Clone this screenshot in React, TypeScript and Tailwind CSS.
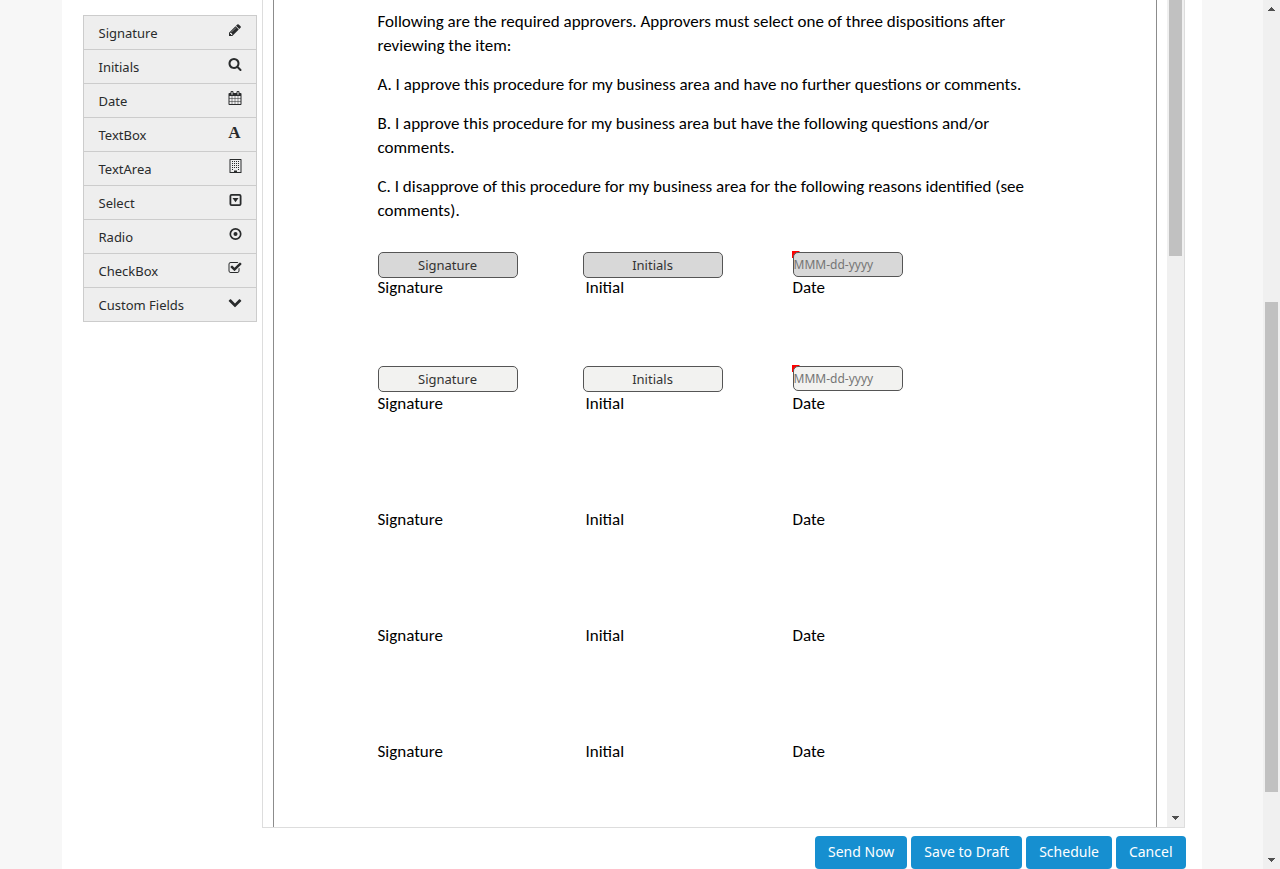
import type { ReactNode } from "react";

function Glyph({ children }: { children: ReactNode }) {
  return (
    <svg viewBox="0 0 1792 1792" className="size-3.5 shrink-0 fill-current" aria-hidden="true">
      {children}
    </svg>
  );
}

const icons = {
  pencil: (
    <Glyph>
      <path d="M491 1536l91-91-235-235-91 91v107h128v128h107zm523-928q0-22-22-22-10 0-17 7l-542 542q-7 7-7 17 0 22 22 22 10 0 17-7l542-542q7-7 7-17zm-54-192l416 416-832 832h-416v-416zm683 96q0 53-37 90l-166 166-416-416 166-165q36-38 90-38 53 0 91 38l235 234q37 39 37 91z" />
    </Glyph>
  ),
  search: (
    <Glyph>
      <path d="M1216 832q0-185-131.5-316.5t-316.5-131.5-316.5 131.5-131.5 316.5 131.5 316.5 316.5 131.5 316.5-131.5 131.5-316.5zm512 832q0 52-38 90t-90 38q-54 0-90-38l-343-342q-179 124-399 124-143 0-273.5-55.5t-225-150-150-225-55.5-273.5 55.5-273.5 150-225 225-150 273.5-55.5 273.5 55.5 225 150 150 225 55.5 273.5q0 220-124 399l343 343q37 37 37 90z" />
    </Glyph>
  ),
  calendar: (
    <Glyph>
      <path d="M192 1664h288v-288h-288v288zm352 0h320v-288h-320v288zm-352-352h288v-320h-288v320zm352 0h320v-320h-320v320zm-352-384h288v-288h-288v288zm736 736h320v-288h-320v288zm-384-736h320v-288h-320v288zm768 736h288v-288h-288v288zm-384-352h320v-320h-320v320zm-352-864v-288q0-13-9.5-22.5t-22.5-9.5h-64q-13 0-22.5 9.5t-9.5 22.5v288q0 13 9.5 22.5t22.5 9.5h64q13 0 22.5-9.5t9.5-22.5zm736 864h288v-320h-288v320zm-384-384h320v-288h-320v288zm384 0h288v-288h-288v288zm32-480v-288q0-13-9.5-22.5t-22.5-9.5h-64q-13 0-22.5 9.5t-9.5 22.5v288q0 13 9.5 22.5t22.5 9.5h64q13 0 22.5-9.5t9.5-22.5zm384-64v1280q0 52-38 90t-90 38h-1408q-52 0-90-38t-38-90v-1280q0-52 38-90t90-38h128v-96q0-66 47-113t113-47h64q66 0 113 47t47 113v96h384v-96q0-66 47-113t113-47h64q66 0 113 47t47 113v96h128q52 0 90 38t38 90z" />
    </Glyph>
  ),
  building: (
    <svg viewBox="0 0 14 14" className="size-3.5 shrink-0 fill-current" aria-hidden="true">
      <path
        fillRule="evenodd"
        d="M2 0h11a.5.5 0 0 1 .5.5v13a.5.5 0 0 1-.5.5H2a.5.5 0 0 1-.5-.5V.5A.5.5 0 0 1 2 0zM2.5 1v12H6v-1.5h3V13h3.5V1z"
      />
      <path d="M4 2h1v1H4zM6 2h1v1H6zM8 2h1v1H8zM10 2h1v1h-1zM4 4h1v1H4zM6 4h1v1H6zM8 4h1v1H8zM10 4h1v1h-1zM4 6h1v1H4zM6 6h1v1H6zM8 6h1v1H8zM10 6h1v1h-1zM4 8h1v1H4zM6 8h1v1H6zM8 8h1v1H8zM10 8h1v1h-1zM4 10h1v1H4zM10 10h1v1h-1z" />
    </svg>
  ),
  select: (
    <svg viewBox="0 0 14 14" className="size-3.5 shrink-0" aria-hidden="true">
      <rect x="2.4" y="1.9" width="10.2" height="10.2" rx="1.2" fill="none" stroke="currentColor" strokeWidth="1.8" />
      <path d="M4.5 5h6l-3 4.2z" fill="currentColor" />
    </svg>
  ),
  radio: (
    <svg viewBox="0 0 14 14" className="size-3.5 shrink-0" aria-hidden="true">
      <circle cx="7.5" cy="7" r="5.2" fill="none" stroke="currentColor" strokeWidth="1.7" />
      <circle cx="7.5" cy="7" r="2" fill="currentColor" />
    </svg>
  ),
  check: (
    <Glyph>
      <path d="M1472 930v318q0 119-84.5 203.5t-203.5 84.5h-832q-119 0-203.5-84.5t-84.5-203.5v-832q0-119 84.5-203.5t203.5-84.5h832q63 0 117 25 15 7 18 23 3 17-9 29l-49 49q-10 10-23 10-3 0-9-2-23-6-45-6h-832q-66 0-113 47t-47 113v832q0 66 47 113t113 47h832q66 0 113-47t47-113v-254q0-13 9-22l64-64q10-10 23-10 6 0 12 3 20 8 20 29zm231-489l-814 814q-24 24-57 24t-57-24l-430-430q-24-24-24-57t24-57l110-110q24-24 57-24t57 24l263 263 647-647q24-24 57-24t57 24l110 110q24 24 24 57t-24 57z" />
    </Glyph>
  ),
  chevron: (
    <Glyph>
      <path d="M1683 808l-742 741q-19 19-45 19t-45-19l-742-741q-19-19-19-45.5t19-45.5l166-165q19-19 45-19t45 19l531 531 531-531q19-19 45-19t45 19l166 165q19 19 19 45.5t-19 45.5z" />
    </Glyph>
  ),
};

const tools: { label: string; icon: ReactNode }[] = [
  { label: "Signature", icon: icons.pencil },
  { label: "Initials", icon: icons.search },
  { label: "Date", icon: icons.calendar },
  {
    label: "TextBox",
    icon: (
      <span aria-hidden="true" className="w-3.5 text-center font-['Liberation_Serif',serif] text-[17px]/4 font-bold">
        A
      </span>
    ),
  },
  { label: "TextArea", icon: icons.building },
  { label: "Select", icon: icons.select },
  { label: "Radio", icon: icons.radio },
  { label: "CheckBox", icon: icons.check },
  { label: "Custom Fields", icon: icons.chevron },
];

const paragraphs = [
  "Following are the required approvers. Approvers must select one of three dispositions after reviewing the item:",
  "A. I approve this procedure for my business area and have no further questions or comments.",
  "B. I approve this procedure for my business area but have the following questions and/or comments.",
  "C. I disapprove of this procedure for my business area for the following reasons identified (see comments).",
];

/* Fields dropped on the document canvas */
const fieldRows = [
  { id: 1, place: "top-[252px]", tone: "bg-[#d8d8d8]" },
  { id: 2, place: "top-[366px]", tone: "bg-[#f2f2f0]" },
];

function FieldRow({ id, place, tone }: { id: number; place: string; tone: string }) {
  const box = `h-[26px] w-[140px] rounded-[5px] border border-[#555] text-[13px] text-[#333] ${tone}`;
  return (
    <div className={`absolute left-[104px] flex items-start font-['Noto_Sans',sans-serif] ${place}`}>
      <button type="button" className={box}>
        Signature
      </button>
      <button type="button" className={`ml-[65px] ${box}`}>
        Initials
      </button>
      <div className="relative ml-[70px]">
        <span className="absolute -top-px -left-px h-[7px] w-2 bg-[#f00]  [clip-path:polygon(0_0,100%_0,100%_30%,30%_100%,0_100%)]" />
        <input
          type="text"
          id={`date-${id}`}
          aria-label="Date"
          placeholder="MMM-dd-yyyy"
          className={`relative block h-[25px] w-[110px] rounded-[5px] border border-[#555] text-xs placeholder:text-[#757575] ${tone}`}
        />
      </div>
    </div>
  );
}

function Arrow({ up = false }: { up?: boolean }) {
  return (
    <svg viewBox="0 0 7 4" className="h-1 w-[7px] fill-[#505050]" shapeRendering="crispEdges" aria-hidden="true">
      <path d={up ? "M0 4V3h1V2h1V1h1V0h1v1h1v1h1v1h1v1z" : "M0 0h7v1H6v1H5v1H4v1H3V3H2V2H1V1H0z"} />
    </svg>
  );
}

export default function App() {
  return (
    <div className="flex h-screen overflow-hidden bg-[#f7f7f7] font-['Noto_Sans',sans-serif]">
      <div className="flex min-w-0 flex-1 justify-center">
        <main className="flex w-full max-w-[1140px] flex-col bg-white pr-4 pl-[21px]">
          <div className="flex min-h-0 flex-1 gap-[5px] pr-px">
            <nav className="w-[174px] shrink-0 pt-[15px]" aria-label="Fields">
              <ul className="border border-b-0 border-[#ccc] bg-[#eee] text-[#292b2c]">
                {tools.map((tool) => (
                  <li key={tool.label} className="border-b border-[#ccc]">
                    <button type="button" className="flex h-[33px] w-full items-start justify-between pr-3.5 pl-[15px]">
                      <span className="pt-[7px] text-[13px]/5">{tool.label}</span>
                      <span className="flex pt-[7px]">{tool.icon}</span>
                    </button>
                  </li>
                ))}
              </ul>
            </nav>
            <section className="flex min-w-0 flex-1 border border-t-0 border-[#ddd]" aria-label="Document">
              <div className="min-w-0 flex-1 overflow-hidden px-2.5">
                <article className="relative min-h-full border-x border-[#8c8c8c] px-[104px] pt-2.5 font-[Carlito,Lato,sans-serif] text-[17px]/6 text-black">
                  <div className="space-y-[15px]">
                    {paragraphs.map((text) => (
                      <p key={text}>{text}</p>
                    ))}
                  </div>
                  <div className="grid grid-cols-[208px_207px_1fr] gap-y-[92px] pt-[53px]">
                    {[0, 1, 2, 3, 4].map((row) => (
                      <div key={row} className="contents">
                        <span>Signature</span>
                        <span>Initial</span>
                        <span>Date</span>
                      </div>
                    ))}
                  </div>
                  {fieldRows.map((row) => (
                    <FieldRow key={row.id} {...row} />
                  ))}
                </article>
              </div>
              <div className="flex w-[17px] shrink-0 flex-col items-center justify-between bg-[#f0f0f0] pb-[7px]">
                <div className="h-64 w-[13px] bg-[#c1c1c1]" />
                <Arrow />
              </div>
            </section>
          </div>
          <footer className="flex justify-end gap-1 pt-2">
            {["Send Now", "Save to Draft", "Schedule", "Cancel"].map((label) => (
              <button
                key={label}
                type="button"
                className="h-[33px] rounded-[4px] bg-[#168fd0] px-[13px] pb-0.5 text-sm whitespace-nowrap text-white"
              >
                {label}
              </button>
            ))}
          </footer>
        </main>
      </div>
      <div className="flex w-[17px] shrink-0 flex-col items-center bg-[#f0f0f0] py-[7px]">
        <Arrow up />
        <div className="flex min-h-0 flex-1 flex-col items-center">
          <div className="flex-[291]" />
          <div className="w-[13px] flex-[490] bg-[#c1c1c1]" />
          <div className="flex-[66]" />
        </div>
        <Arrow />
      </div>
    </div>
  );
}
